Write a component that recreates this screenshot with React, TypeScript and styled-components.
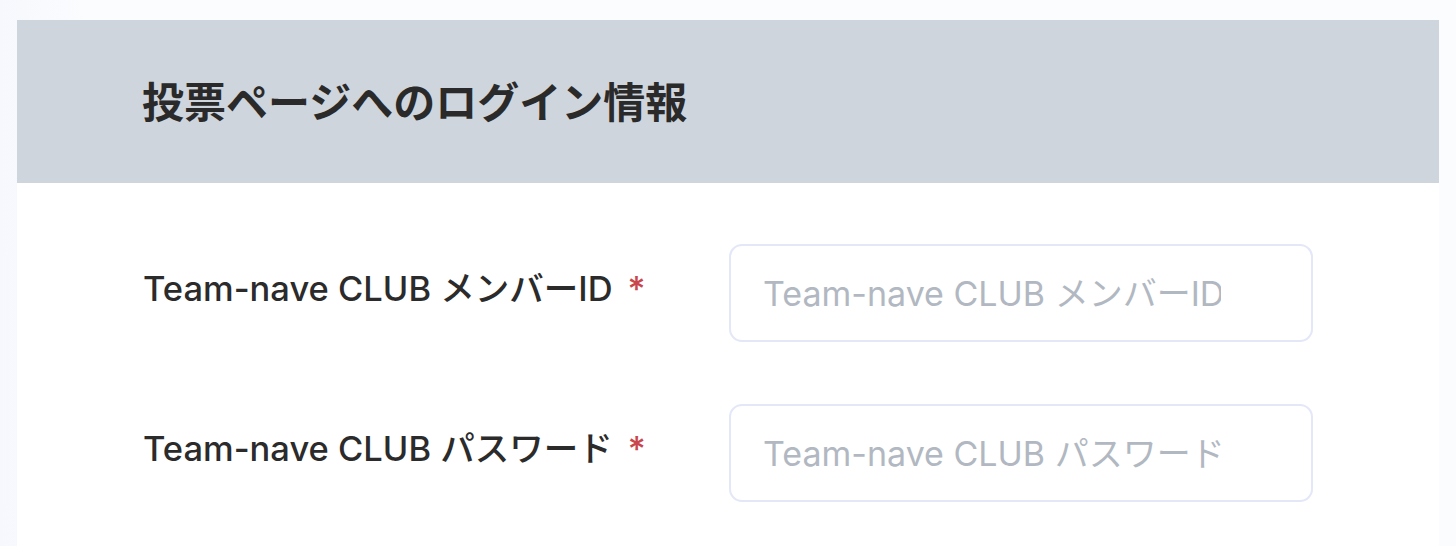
import React from "react";
import styled, { createGlobalStyle } from "styled-components";

const GlobalStyle = createGlobalStyle`
  html, body {
    margin: 0;
    padding: 0;
  }
  body {
    font-family: Inter, "Noto Sans CJK JP", sans-serif;
    background: linear-gradient(90deg, #f6f8fd 0%, #fbfcfe 6%, #fbfcfe 100%);
    color: #2b2b2b;
  }
`;

const Page = styled.div`
  min-height: 546px;
  padding: 20px 17px 0 17px;
  box-sizing: border-box;
`;

const Card = styled.section`
  background: #ffffff;
  min-height: 526px;
`;

const CardHeader = styled.header`
  background: #cfd5dc;
  height: 163px;
  display: flex;
  align-items: center;
  padding-left: 125px;
`;

const Title = styled.h2`
  margin: 0;
  font-family: "Noto Sans CJK JP", sans-serif;
  font-size: 42px;
  font-weight: 700;
  color: #2a2a2a;
  line-height: 1;
  transform: translateY(-2px);
`;

const Form = styled.div`
  display: flex;
  flex-direction: column;
  gap: 62px;
  padding: 61px 0 0 126px;
`;

const Row = styled.div`
  display: grid;
  grid-template-columns: 586px 584px;
  align-items: center;
`;

const Label = styled.label`
  font-family: Inter, "Noto Sans CJK JP", sans-serif;
  font-size: 34.5px;
  font-weight: 500;
  color: #2b2b2b;
  line-height: 1;
  transform: translateY(-4px);
`;

const Required = styled.span`
  color: #c8464c;
  margin-left: 15px;
`;

const Input = styled.input`
  box-sizing: border-box;
  width: 584px;
  height: 98px;
  border: 2px solid #e3e7f8;
  border-radius: 13px;
  background: #ffffff;
  padding: 0 90px 0 32px;
  font-family: Inter, "Noto Sans CJK JP", sans-serif;
  font-size: 34px;
  color: #2b2b2b;
  outline: none;

  &::placeholder {
    color: #b1b8c1;
  }
`;

const fields = [
  { id: "member-id", label: "Team-nave CLUB メンバーID", type: "text" },
  { id: "password", label: "Team-nave CLUB パスワード", type: "password" },
];

export default function App() {
  return (
    <>
      <GlobalStyle />
      <Page>
        <Card>
          <CardHeader>
            <Title>投票ページへのログイン情報</Title>
          </CardHeader>
          <Form>
            {fields.map((f) => (
              <Row key={f.id}>
                <Label htmlFor={f.id}>
                  {f.label}
                  <Required>*</Required>
                </Label>
                <Input id={f.id} type={f.type} placeholder={f.label} />
              </Row>
            ))}
          </Form>
        </Card>
      </Page>
    </>
  );
}
